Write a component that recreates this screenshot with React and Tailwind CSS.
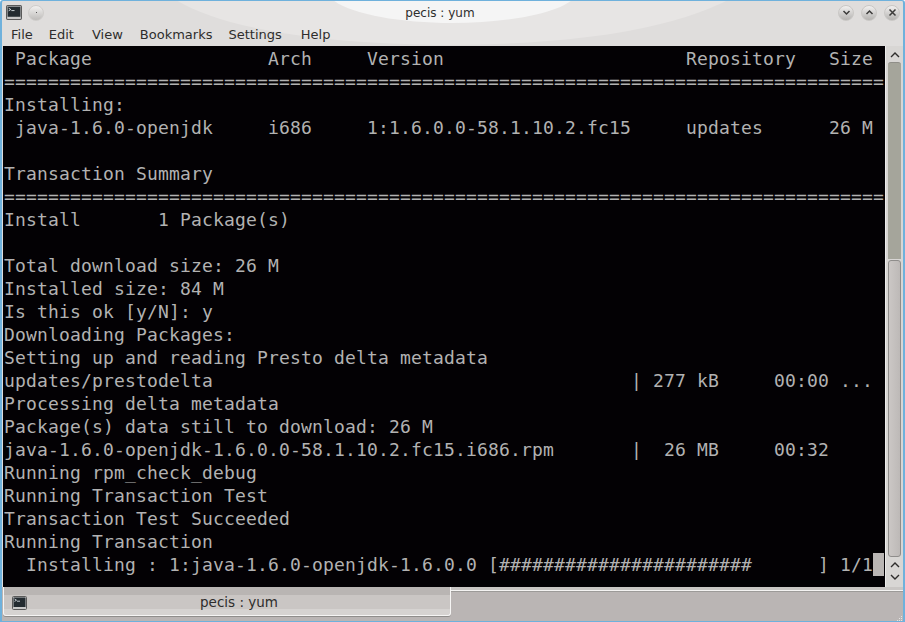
const lines = [
" Package                Arch     Version                      Repository   Size",
"================================================================================",
"Installing:",
" java-1.6.0-openjdk     i686     1:1.6.0.0-58.1.10.2.fc15     updates      26 M",
"",
"Transaction Summary",
"================================================================================",
"Install       1 Package(s)",
"",
"Total download size: 26 M",
"Installed size: 84 M",
"Is this ok [y/N]: y",
"Downloading Packages:",
"Setting up and reading Presto delta metadata",
"updates/prestodelta                                      | 277 kB     00:00 ...",
"Processing delta metadata",
"Package(s) data still to download: 26 M",
"java-1.6.0-openjdk-1.6.0.0-58.1.10.2.fc15.i686.rpm       |  26 MB     00:32",
"Running rpm_check_debug",
"Running Transaction Test",
"Transaction Test Succeeded",
"Running Transaction",
"  Installing : 1:java-1.6.0-openjdk-1.6.0.0 [#######################      ] 1/1",
];

function TermIcon({ className }) {
  return (
    <svg viewBox="0 0 15 14" className={className}>
      <rect x="0.5" y="0.5" width="14" height="13" rx="1" fill="#c8c8c8" stroke="#5a5a5a" />
      <rect x="1.5" y="1.5" width="12" height="9.5" fill="#232b30" />
      <path d="M2.5 3l2 1.2-2 1.2" stroke="#e8eef2" strokeWidth="0.8" fill="none" />
      <path d="M5 5.2h3" stroke="#e8eef2" strokeWidth="0.8" />
    </svg>
  );
}

function RoundBtn({ children }) {
  return (
    <div className="w-[16px] h-[16px] rounded-full bg-gradient-to-b from-[#f2f1f0] to-[#b5b3b1] border border-[#c9c7c5] flex items-center justify-center">
      <svg viewBox="0 0 9 9" className="w-[9px] h-[9px]" fill="none" stroke="#3c3b3a" strokeWidth="1.5">
        {children}
      </svg>
    </div>
  );
}

export default function App() {
  return (
    <div className="relative w-[905px] h-[622px] overflow-hidden flex flex-col bg-[#dfdddc] border-x-[2px] border-t-[1px] border-b-[1px] border-[#6fb1dc] rounded-t-[3px] font-['DejaVu_Sans',sans-serif] text-[#2e2d2c]">
      <svg className="absolute left-[-2px] top-[-1px] pointer-events-none" width="905" height="46" viewBox="0 0 905 46">
        <path d="M176 0 C 215 24, 300 44, 450 45 C 600 44, 680 24, 728 0 Z" fill="#e7e5e4" />
        <path d="M333 0 C 350 14, 400 23, 452 23 C 505 23, 555 14, 572 0 Z" fill="#f5f5f5" />
      </svg>

      <div className="relative h-[22px] flex items-center shrink-0 pl-[4px] pr-[3px]">
        <TermIcon className="w-[16px] h-[15px] mt-[1px]" />
        <div className="ml-[6px] mt-[1px] w-[16px] h-[16px] rounded-full bg-gradient-to-b from-[#f2f1f0] to-[#bebcba] border border-[#cfcdcb] flex items-center justify-center">
          <div className="w-[1px] h-[1px] bg-[#555]" />
        </div>
        <div className="flex-1 text-center text-[12px] leading-none pr-[2px] mt-[1px]">pecis : yum</div>
        <div className="flex items-center gap-[7px] mt-[1px]">
          <RoundBtn><path d="M1.5 3l3 3 3-3" /></RoundBtn>
          <RoundBtn><path d="M1.5 6l3-3 3 3" /></RoundBtn>
          <RoundBtn><path d="M1.5 1.5l6 6M7.5 1.5l-6 6" /></RoundBtn>
        </div>
      </div>

      <div className="relative h-[23px] flex items-center shrink-0 pl-[9px] gap-[17px] text-[13px]">
        <span>File</span>
        <span className="-ml-[1px]">Edit</span>
        <span className="ml-[1px]">View</span>
        <span>Bookmarks</span>
        <span className="-ml-[1px]">Settings</span>
        <span className="ml-[2px]">Help</span>
      </div>

      <div className="relative h-[541px] shrink-0 flex pl-[1px]">
        <div className="relative w-[882px] h-[541px] bg-[#030104] text-[#b2b2b2] font-['DejaVu_Sans_Mono',monospace] text-[18px] leading-[23px] tracking-[0.163px] pl-[1px] pt-[1px] overflow-hidden">
          {lines.map((l, i) => (
            <div key={i} className="h-[23px] whitespace-pre">{l}</div>
          ))}
          <div className="absolute left-[870px] top-[507px] w-[11px] h-[23px] bg-[#bab6b4]" />
        </div>

        <div className="w-[18px] h-[541px] flex flex-col items-center bg-[#d8d6d4] border-l border-[#ecebea]">
          <svg viewBox="0 0 10 6" className="w-[10px] h-[6px] mt-[6px]" fill="none" stroke="#2e2d2c" strokeWidth="1.4"><path d="M1 5l4-4 4 4" /></svg>
          <div className="mt-[4px] w-[13px] h-[197px] bg-[#a5a59b] rounded-t-[3px] border-t border-[#8f8e88]" />
          <div className="w-[13px] h-[297px] mt-[1px] bg-gradient-to-r from-[#cbc7c5] to-[#bdb9b7] rounded-[3px] border border-[#8f8d8b]" />
          <svg viewBox="0 0 10 6" className="w-[10px] h-[6px] mt-[5px]" fill="none" stroke="#2e2d2c" strokeWidth="1.4"><path d="M1 5l4-4 4 4" /></svg>
          <svg viewBox="0 0 10 6" className="w-[10px] h-[6px] mt-[6px]" fill="none" stroke="#2e2d2c" strokeWidth="1.4"><path d="M1 1l4 4 4-4" /></svg>
        </div>
      </div>

      <div className="relative flex-1 flex items-start min-h-0 bg-[#bab5b4]">
        <div className="ml-[1px] w-[448px] h-[29px] relative flex items-center bg-[linear-gradient(#b9b5b3_0,#b9b5b3_8px,#cac6c4_8px,#cac6c4_22px,#d6d3d1_22px)] rounded-b-[3px] border-x border-b border-[#f6f5f4] shadow-[0_1px_0_#8f8d8b]">
          <TermIcon className="absolute left-[8px] top-[9px] w-[15px] h-[14px]" />
          <div className="flex-1 text-center text-[13.5px] pl-[24px] pt-[3px]">pecis : yum</div>
        </div>
        <div className="flex-1 h-full flex flex-col">
          <div className="h-[3px] bg-[#c9c6c4]" />
          <div className="flex-1 bg-[#bab5b4] border-t border-[#f4f3f2] shadow-[inset_0_1px_0_#9c9a98]" />
        </div>
        <svg className="absolute right-0 bottom-0" width="6" height="6" viewBox="0 0 6 6" fill="#e6e4e2">
          <rect x="4" y="1" width="1" height="1" />
          <rect x="2" y="3" width="1" height="1" />
          <rect x="4" y="3" width="1" height="1" />
          <rect x="0" y="5" width="1" height="1" />
          <rect x="2" y="5" width="1" height="1" />
          <rect x="4" y="5" width="1" height="1" />
        </svg>
      </div>
    </div>
  );
}
